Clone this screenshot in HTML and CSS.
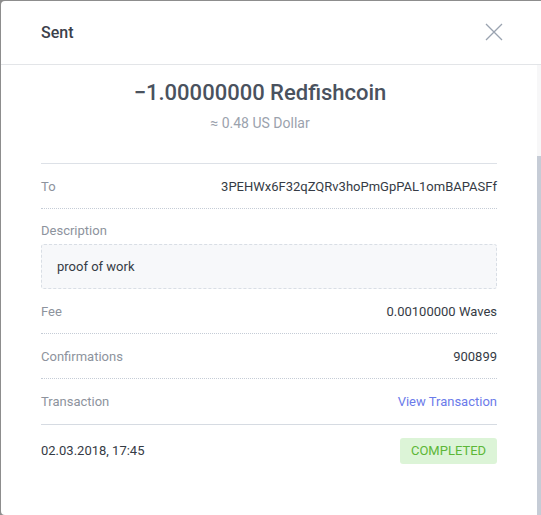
FILE: index.html
```html
<!DOCTYPE html>
<html>
<head>
<meta charset="utf-8">
<link rel="stylesheet" href="styles.css">
</head>
<body>
<div class="modal">
  <div class="modal-header">
    <span class="title">Sent</span>
    <svg class="close" width="18" height="18" viewBox="0 0 18 18"><path d="M1 1 L17 17 M17 1 L1 17" stroke="#9aa3b0" stroke-width="1.3" fill="none"/></svg>
  </div>
  <div class="modal-body">
    <div class="summary">
      <div class="amount">−1.00000000 Redfishcoin</div>
      <div class="fiat">≈ 0.48 US Dollar</div>
    </div>
    <div class="details">
      <div class="row dotted">
        <span class="label">To</span>
        <span class="value">3PEHWx6F32qZQRv3hoPmGpPAL1omBAPASFf</span>
      </div>
      <div class="desc">
        <div class="label">Description</div>
        <div class="desc-box">proof of work</div>
      </div>
      <div class="row dotted">
        <span class="label">Fee</span>
        <span class="value">0.00100000 Waves</span>
      </div>
      <div class="row dotted">
        <span class="label">Confirmations</span>
        <span class="value">900899</span>
      </div>
      <div class="row solid">
        <span class="label">Transaction</span>
        <a class="link" href="#">View Transaction</a>
      </div>
      <div class="footer">
        <span class="value">02.03.2018, 17:45</span>
        <span class="badge">COMPLETED</span>
      </div>
    </div>
  </div>
  <div class="scroll-track"><div class="scroll-thumb"></div></div>
</div>
</body>
</html>
```
FILE: styles.css
```css
html, body {
  margin: 0;
  padding: 0;
  height: 100%;
  overflow: hidden;
}
body {
  background: #8d8d8d;
  font-family: Roboto, "Liberation Sans", sans-serif;
  color: #353b45;
}
.modal {
  position: relative;
  margin: 1px 0 0 1px;
  width: 545px;
  height: 514px;
  background: #fff;
  border-radius: 4px;
  overflow: hidden;
}
.modal-header {
  height: 63px;
  border-bottom: 1px solid #e3e5e8;
  display: flex;
  align-items: center;
  justify-content: space-between;
  padding: 0 40px;
  width: 460px;
  box-sizing: content-box;
}
.title {
  font-size: 16px;
  font-weight: 500;
  color: #3b414b;
  margin-top: -1px;
}
.close {
  margin-right: -2px;
  margin-top: -1px;
}
.modal-body {
  padding: 0 43px 0 40px;
  width: 456px;
}
.summary {
  padding: 13px 18px 0 0;
  text-align: center;
}
.amount {
  font-size: 22px;
  font-weight: 500;
  color: #4a525e;
  line-height: 30px;
}
.fiat {
  font-size: 14px;
  color: #9ba2ad;
  line-height: 20px;
  margin-top: 5px;
}
.details {
  margin-top: 30px;
  border-top: 1px solid #dde1e7;
}
.row {
  height: 44px;
  display: flex;
  align-items: center;
  justify-content: space-between;
  font-size: 13px;
}
.row.dotted {
  border-bottom: 1px dotted #c5ccd6;
}
.row.solid {
  height: 45px;
  border-bottom: 1px solid #d6dbe2;
}
.label {
  color: #8d939d;
  font-size: 13px;
}
.value {
  color: #353b45;
  font-size: 13px;
}
.desc {
  padding-top: 13px;
  font-size: 13px;
}
.desc .label {
  line-height: 17px;
}
.desc-box {
  margin-top: 5px;
  height: 43px;
  border: 1px dashed #d9dee5;
  border-radius: 3px;
  background: #f7f8fa;
  display: flex;
  align-items: center;
  padding-left: 15px;
  color: #353b45;
}
.link {
  color: #6b7bea;
  text-decoration: none;
  font-size: 13px;
}
.footer {
  display: flex;
  justify-content: space-between;
  align-items: center;
  height: 51px;
}
.badge {
  background: #dcf4d7;
  color: #5cb737;
  font-size: 13px;
  border-radius: 3px;
  width: 97px;
  height: 26px;
  display: flex;
  align-items: center;
  justify-content: center;
}
.scroll-track {
  position: absolute;
  left: 536px;
  top: 64px;
  width: 4px;
  bottom: 0;
  background: #f7f7f8;
}
.scroll-thumb {
  position: absolute;
  top: 91px;
  left: 0;
  width: 4px;
  bottom: -40px;
  background: #c6ccd6;
}
```
